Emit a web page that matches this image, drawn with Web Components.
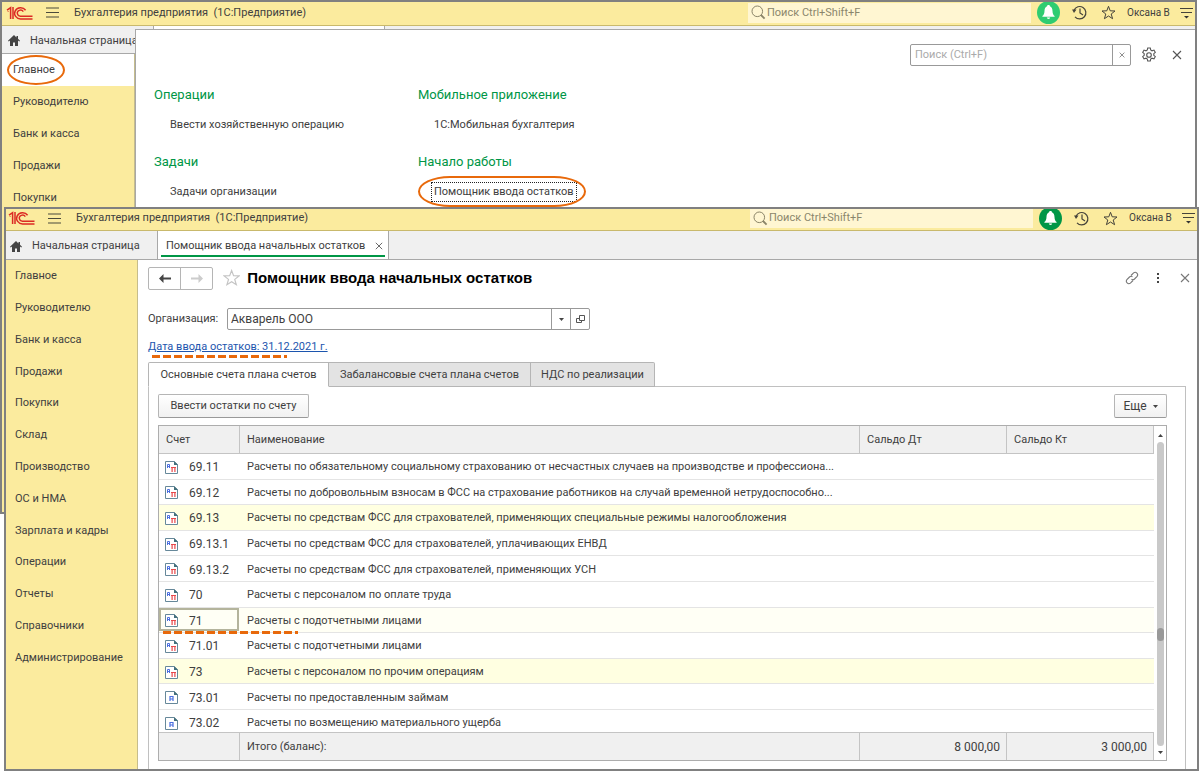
<!DOCTYPE html>
<html lang="ru">
<head>
<meta charset="utf-8">
<title>Бухгалтерия предприятия</title>
<style>
  html { height: 100%; }
  body {
    margin: 0;
    min-height: 100%;
    background: #fff;
    color: #404040;
    font: 11px/16px Roboto, "Liberation Sans", sans-serif;
    --yellow: #fbeb9e;
    --green: #009646;
    --accent: #e8690b;
    --line: #a8a8a8;
  }
</style>
</head>
<body>
<desk-top>
  <app-window class="back">
    <app-topbar slot="bar" bell="#2ecc71"></app-topbar>
    <open-tabs slot="tabs"></open-tabs>
    <section-nav slot="nav" current="Главное" items="Главное|Руководителю|Банк и касса|Продажи|Покупки"></section-nav>
    <function-panel slot="overlay">
      <function-group heading="Операции"><a href="#operation">Ввести хозяйственную операцию</a></function-group>
      <function-group heading="Мобильное приложение"><a href="#mobile">1С:Мобильная бухгалтерия</a></function-group>
      <function-group heading="Задачи"><a href="#tasks">Задачи организации</a></function-group>
      <function-group heading="Начало работы"><a href="#helper" class="focus">Помощник ввода остатков</a></function-group>
    </function-panel>
  </app-window>
  <app-window class="front">
    <app-topbar slot="bar" bell="#009646"></app-topbar>
    <open-tabs slot="tabs" active="Помощник ввода начальных остатков"></open-tabs>
    <section-nav slot="nav" items="Главное|Руководителю|Банк и касса|Продажи|Покупки|Склад|Производство|ОС и НМА|Зарплата и кадры|Операции|Отчеты|Справочники|Администрирование"></section-nav>
    <balance-form>
      <tab-pane><account-table></account-table></tab-pane>
    </balance-form>
  </app-window>
</desk-top>

<script>
const ICONS = {
  logo: ['0 0 27 14', `<g fill="none" stroke="#dc2a24"><path d="M1 4.2 4.6 1.6V13" stroke-width="1.5"/><path d="M2.2 5.5V5M7 1v12" stroke-width="1.5"/><path d="M19.6 4.2A6 5.6 0 1 0 15 12.9H26.5" stroke-width="1.5"/><path d="M17.3 5.6A3.2 3.1 0 1 0 15 10.2H26.5" stroke-width="1.4"/></g>`],
  burger: ['0 0 13 11', `<path d="M0 1h13M0 5.5h13M0 10h13" stroke="#4a4a3c" stroke-width="1.2"/>`],
  search: ['0 0 15 15', `<g fill="none" stroke="#8a8468"><circle cx="6.3" cy="6.3" r="5.3"/><path d="m10 10 3.6 3.6" stroke-width="1.8"/></g>`],
  bell: ['0 0 23 23', `<circle cx="11.5" cy="11.5" r="11.5" fill="currentColor"/><path fill="#fff" d="M11.5 4c.9 0 1.4.5 1.4 1.3 1.8.8 2.5 2.4 2.6 4.6.1 2.700.7 3.800 2.100 5.100v.8H5.400V15c1.400-1.300 2-2.400 2.100-5.100.1-2.200.8-3.800 2.600-4.600 0-.8.5-1.300 1.400-1.300zM9.800 16.500h3.400a1.700 1.500 0 0 1-3.400 0z"/>`],
  history: ['0 0 15 15', `<g fill="none" stroke="#45433a" stroke-width="1.2"><path d="M2 5.200A6.200 6.200 0 1 1 3 11.800"/><path d="M8 3.500V8l3 2"/></g><path fill="#45433a" d="M0 4.500h4.500L2 8z"/>`],
  star: ['0 0 15 15', `<path fill="none" stroke="currentColor" d="m7.500 1.300 1.700 4.500 4.800.2-3.800 3 1.400 4.700-4.100-2.700-4.100 2.700 1.400-4.700-3.800-3 4.800-.2z"/>`],
  settings: ['0 0 13 12', `<path d="M0 1.500h13M1 5.500h11" stroke="#45433a" stroke-width="1.200"/><path fill="#333" d="M4 9h5l-2.500 2.500z"/>`],
  home: ['0 0 12 11', `<path fill="#444" d="M6 0 0 5.700l.7.8L2 5.400V11h3V7.500h2V11h3V5.400l1.300 1.100.7-.8-2-1.900V1H8.500v1.400z"/>`],
  cross: ['0 0 10 10', `<path d="m1 1 8 8M9 1 1 9" stroke="currentColor" stroke-width="1.100"/>`],
  gear: ['0 0 16 16', `<g fill="none" stroke="#555" stroke-width="1.100"><circle cx="8" cy="8" r="2.300"/><path d="M6.700 1h2.600l.4 2 1.300.8 2-.7 1.300 2.200-1.500 1.400v1.600l1.500 1.400-1.300 2.200-2-.7-1.300.8-.4 2H6.700l-.4-2-1.300-.8-2 .7-1.300-2.200 1.500-1.400V6.700L1.700 5.300 3 3.100l2 .7 1.300-.8z"/></g>`],
  left: ['0 0 12 9', `<path fill="currentColor" d="M0 4.500 4.500 0v3.500H12v2H4.500V9z"/>`],
  right: ['0 0 12 9', `<path fill="currentColor" d="M12 4.500 7.500 0v3.500H0v2h7.500V9z"/>`],
  link: ['0 0 14 14', `<g fill="none" stroke="#777" stroke-width="1.100"><path d="M6 4.500 8.600 1.900a2.500 2.500 0 0 1 3.500 3.500L9.500 8A2.500 2.500 0 0 1 6.500 8.300"/><path d="M8 9.500 5.400 12.100a2.500 2.500 0 0 1-3.500-3.500L4.500 6a2.500 2.500 0 0 1 3-.3"/></g>`],
  dots: ['0 0 4 10', `<path fill="#444" d="M1 0h2v2H1zM1 4h2v2H1zM1 8h2v2H1z"/>`],
  down: ['0 0 5 3', `<path fill="#444" d="M0 0h5L2.500 3z"/>`],
  up: ['0 0 5 3', `<path fill="#444" d="M0 3h5L2.500 0z"/>`],
  open: ['0 0 9 9', `<path fill="none" stroke="#555" d="M3.500.5h5v5h-5zM3.500 3.500h-3v4h5v-2"/>`],
  both: ['0 0 13 13', `<path fill="#fff" stroke="#66889a" d="M.5.5h8.500l3.500 3v9H.5z"/><path fill="#44707c" d="M9 0v4h4z"/><path fill="none" stroke="#4a6ee0" d="M2.500 7V3.500h2V7M2.500 5.500h2"/><path fill="none" stroke="#e8484a" stroke-width="1.200" d="M6 6.500h5M7.100 6.500V11M9.900 6.500V11"/>`],
  active: ['0 0 13 13', `<path fill="#fff" stroke="#66889a" d="M.5.5h8.500l3.500 3v9H.5z"/><path fill="#44707c" d="M9 0v4h4z"/><path fill="none" stroke="#4a6ee0" stroke-width="1.200" d="M5 10V5.500h3V10M5 8h3"/>`],
};

const define = (name, css, html) => customElements.define(name, class extends HTMLElement {
  connectedCallback() {
    if (this.shadowRoot) return;
    const root = this.attachShadow({ mode: 'open' });
    root.innerHTML = `<style>:host{display:block}*,*::before,*::after{box-sizing:border-box}button,input{font:inherit;color:inherit;margin:0;padding:0;border:0;background:none}button{display:grid;place-items:center}a{color:inherit;text-decoration:none}${css}</style>${html(this)}`;
  }
});

define('app-icon', `:host{display:inline-block;flex:none;line-height:0}svg{display:block}`, el => {
  const [box, body] = ICONS[el.getAttribute('name')];
  const [, , w, h] = box.split(' ');
  const size = +(el.getAttribute('scale') || 1);
  return `<svg viewBox="${box}" width="${w * size}" height="${h * size}" aria-hidden="true">${body}</svg>`;
});

define('desk-top', `
  :host{display:grid;grid-template:auto / minmax(0,1fr)}
  ::slotted(*){grid-area:1/1}
  ::slotted(.back){margin-right:3px;height:514px;--bar:24px;--inset:4px;--home:6px;--lift:2px;--rows:159px;--tabs:28px;--nav:133px}
  ::slotted(.front){margin:207px 1px 2px 4px;--bar:22px;--inset:2px;--home:4px;--lift:3px;--rows:413px;--tabs:29px;--nav:132px}
`, () => `<slot></slot>`);

define('app-window', `
  :host{display:flex;flex-direction:column;box-sizing:border-box;position:relative;border:2px solid #808080;background:#fff;min-width:0}
  .body{display:flex;flex:1;min-height:0}
  .body>slot:last-child::slotted(*){flex:1;min-width:0}
`, () => `<slot name="bar"></slot><slot name="tabs"></slot><div class="body"><slot name="nav"></slot><slot></slot></div><slot name="overlay"></slot>`);

define('app-topbar', `
  header{display:flex;align-items:center;height:var(--bar);padding:0 2px var(--lift) var(--inset);background:var(--yellow);border-bottom:1px solid #c9b96c;overflow:hidden}
  .burger{margin:0 15px 0 13px}
  h1{margin:0;flex:1;font-size:11px;font-weight:400;white-space:pre}
  label{display:flex;align-items:center;gap:1px;width:283px;height:20px;padding-left:3px;background:#fff6d2}
  input{flex:1;min-width:0;height:16px;outline:0}
  input::placeholder{color:#8b866c;opacity:1}
  .bell{color:var(--bell);margin-left:6px}
  .hist{margin-left:12px}.star{margin-left:14px;color:#45433a}
  .user{margin-left:11px;width:53px;font-size:10px;text-align:left}
`, el => `<header style="--bell:${el.getAttribute('bell')}">
  <app-icon name="logo"></app-icon>
  <button class="burger" aria-label="Меню"><app-icon name="burger"></app-icon></button>
  <h1>Бухгалтерия предприятия  (1С:Предприятие)</h1>
  <label aria-label="Поиск"><app-icon name="search"></app-icon><input type="search" placeholder="Поиск Ctrl+Shift+F"></label>
  <button class="bell" aria-label="Уведомления"><app-icon name="bell"></app-icon></button>
  <button class="hist" aria-label="История"><app-icon name="history"></app-icon></button>
  <button class="star" aria-label="Избранное"><app-icon name="star"></app-icon></button>
  <a class="user" href="#user">Оксана В</a>
  <button aria-label="Настройки"><app-icon name="settings"></app-icon></button>
</header>`);

define('open-tabs', `
  nav{display:flex;height:var(--tabs);background:#f0f0f0;border-bottom:1px solid var(--line)}
  a{display:flex;align-items:center}
  .home{width:152px;gap:10px;padding:2px 0 0 var(--home);border-right:1px solid var(--line);white-space:nowrap}
  .tab{position:relative;width:231px;padding:2px 5px 0 8px;background:#fff;border-right:1px solid var(--line);display:flex;align-items:center;justify-content:space-between;white-space:nowrap}
  .on::after{content:"";position:absolute;inset:auto 3px 2px 3px;height:2px;background:var(--green)}
  button{color:#555}
`, el => {
  const t = el.getAttribute('active');
  return `<nav><a class="home" href="#home"><app-icon name="home"></app-icon>Начальная страница</a><div class="tab ${t ? 'on' : ''}">${t ? `<a href="#tab">${t}</a><button aria-label="Закрыть вкладку"><app-icon name="cross" scale="0.8"></app-icon></button>` : ''}</div></nav>`;
});

define('section-nav', `
  :host{flex:none;width:var(--nav);box-sizing:border-box;background:var(--yellow);border-right:1px solid #c6bd8c}
  nav{display:grid;grid-auto-rows:1fr;height:var(--rows)}
  a{display:flex;align-items:center;padding:1px 0 0 9px}
  .current{position:relative;background:#fff;padding-left:11px}
  .current~a{padding-left:11px}
  .current::after{content:"";position:absolute;inset:1px auto 1px 5px;width:58px;border:2px solid var(--accent);border-radius:50%/50%}
`, el => `<nav>${el.getAttribute('items').split('|').map(t => `<a href="#section"${t === el.getAttribute('current') ? ' class="current" aria-current="page"' : ''}>${t}</a>`).join('')}</nav>`);

define('function-panel', `
  :host{position:absolute;inset:27px 0 0 133px;border:1px solid var(--line);border-width:1px 0 0 1px;background:#fff}
  .tools{display:flex;justify-content:flex-end;align-items:center;padding:14px 13px 0 0}
  .find{display:flex;width:221px;height:22px;border:1px solid #999;border-radius:2px}
  input{flex:1;min-width:0;padding:0 4px;outline:0}
  input::placeholder{color:#aaa;opacity:1}
  .find button{width:18px;border-left:1px solid #999;color:#555}
  .gear{margin:0 15px 0 10px}
  .close{color:#555}
  .groups{display:grid;grid-template-columns:264px 264px;grid-auto-rows:67px;padding:19px 0 0 18px}
`, () => `<div class="tools"><div class="find"><input type="text" aria-label="Поиск" placeholder="Поиск (Ctrl+F)"><button aria-label="Очистить"><app-icon name="cross" scale="0.6"></app-icon></button></div>
  <button class="gear" aria-label="Настройка"><app-icon name="gear"></app-icon></button><button class="close" aria-label="Закрыть"><app-icon name="cross"></app-icon></button></div>
  <div class="groups"><slot></slot></div>`);

define('function-group', `
  h2{margin:0;font-size:13px;line-height:20px;font-weight:400;color:var(--green)}
  .list{padding:11px 0 0 14px;display:flex}
  ::slotted(a){position:relative;color:#404040;text-decoration:none;padding:0 2px;line-height:18px}
  ::slotted(.focus){outline:1px dotted #222}
  .mark{position:relative;display:flex}
  .ring::after{content:"";position:absolute;inset:-7px -10px -6px -14px;border:2px solid var(--accent);border-radius:32px/50%}
`, el => `<h2>${el.getAttribute('heading')}</h2><div class="list"><span class="mark ${el.querySelector('.focus') ? 'ring' : ''}"><slot></slot></span></div>`);

define('balance-form', `
  :host{display:flex;flex-direction:column;padding:6px 11px 0 10px}
  .title{display:flex;align-items:center;height:24px}
  .hist{display:flex;width:65px;height:23px;border:1px solid #b5b5b5;border-radius:2px}
  .hist button{flex:1;color:#444}
  .hist button+button{color:#ccc;border-left:1px solid #b5b5b5}
  .star{margin:0 7px 0 10px;color:#c4c4c4}
  h1{margin:0;flex:1;font:bold 15px/20px "Liberation Sans",Arial,sans-serif;color:#000}
  .menu{margin:0 20px 0 17px}
  .close{color:#777;margin-right:-4px}
  .org{display:flex;align-items:center;margin-top:18px}
  .org label{width:79px}
  .field{display:flex;width:363px;height:22px;border:1px solid #999;border-radius:2px}
  input{flex:1;min-width:0;padding:0 3px;outline:0;font-size:12px}
  .field button{width:19px;border-left:1px solid #999}
  .date{display:flex;margin-top:8px}
  .date a{position:relative;color:#1c55ae;text-decoration:underline;line-height:18px}
  .date a::after{content:"";position:absolute;left:4px;bottom:-2px;width:135px;height:3px;background:repeating-linear-gradient(90deg,var(--accent) 0 8px,transparent 8px 11px)}
  slot{display:flex;flex:1;margin-top:6px}
  ::slotted(*){flex:1;min-width:0}
`, () => `<div class="title"><div class="hist"><button aria-label="Назад"><app-icon name="left"></app-icon></button><button aria-label="Вперед" disabled><app-icon name="right"></app-icon></button></div>
  <button class="star" aria-label="В избранное"><app-icon name="star" scale="1.15"></app-icon></button><h1>Помощник ввода начальных остатков</h1>
  <button aria-label="Ссылка"><app-icon name="link"></app-icon></button><button class="menu" aria-label="Еще"><app-icon name="dots"></app-icon></button><button class="close" aria-label="Закрыть"><app-icon name="cross"></app-icon></button></div>
  <div class="org"><label for="org">Организация:</label><div class="field"><input id="org" type="text" value="Акварель ООО"><button aria-label="Выбрать"><app-icon name="down"></app-icon></button><button aria-label="Открыть"><app-icon name="open"></app-icon></button></div></div>
  <div class="date"><a href="#date">Дата ввода остатков: 31.12.2021 г.</a></div>
  <slot></slot>`);

define('tab-pane', `
  :host{display:flex;flex-direction:column}
  .tabs{display:flex;position:relative;height:25px;margin-bottom:-1px}
  .tabs button{border:1px solid #b5b5b5;border-left:0;background:#e3e3e3;width:202px}
  .tabs button:first-child{width:181px;border-left:1px solid #b5b5b5;background:#fff;border-bottom-color:#fff;border-radius:2px 0 0 0}
  .tabs button:last-child{width:124px;border-radius:0 2px 0 0}
  .pane{flex:1;display:flex;flex-direction:column;gap:7px;border:1px solid #c0c0c0;border-bottom:0;padding:7px 18px 8px 9px}
  .tools{display:flex;justify-content:space-between}
  .tools button{height:24px;width:151px;border:1px solid #b5b5b5;border-bottom-color:#999;border-radius:2px;background:linear-gradient(#fff,#f1f1f1)}
  .tools .more{width:53px;display:flex;justify-content:center;align-items:center;gap:6px;font-size:12px}
`, () => `<div class="tabs" role="tablist"><button role="tab" aria-selected="true">Основные счета плана счетов</button><button role="tab">Забалансовые счета плана счетов</button><button role="tab">НДС по реализации</button></div>
  <div class="pane"><div class="tools"><button>Ввести остатки по счету</button><button class="more">Еще<app-icon name="down"></app-icon></button></div><slot></slot></div>`);

const ROWS = [
  ['69.11', 'Расчеты по обязательному социальному страхованию от несчастных случаев на производстве и профессиона...'],
  ['69.12', 'Расчеты по добровольным взносам в ФСС на страхование работников на случай временной нетрудоспособно...'],
  ['69.13', 'Расчеты по средствам ФСС для страхователей, применяющих специальные режимы налогообложения', 'group'],
  ['69.13.1', 'Расчеты по средствам ФСС для страхователей, уплачивающих ЕНВД'],
  ['69.13.2', 'Расчеты по средствам ФСС для страхователей, применяющих УСН'],
  ['70', 'Расчеты с персоналом по оплате труда'],
  ['71', 'Расчеты с подотчетными лицами', 'selected'],
  ['71.01', 'Расчеты с подотчетными лицами'],
  ['73', 'Расчеты с персоналом по прочим операциям', 'group'],
  ['73.01', 'Расчеты по предоставленным займам', '', 'active'],
  ['73.02', 'Расчеты по возмещению материального ущерба', 'cut', 'active'],
];

define('account-table', `
  :host{display:flex;border:1px solid #adadad}
  table{flex:1;min-width:0;width:0;height:334px;table-layout:fixed;border-collapse:separate;border-spacing:0}
  .acc{width:81px}.sum{width:147px}
  th,td{padding:0 7px;text-align:left;font-weight:400;vertical-align:middle;white-space:nowrap;overflow:hidden}
  thead th,tfoot td{height:28px;background:#f0f0f0;border-right:1px solid #c4c4c4}
  thead th{border-bottom:1px solid #c4c4c4}
  tfoot td{border-top:1px solid #c4c4c4;text-align:right;font-size:12px;padding-right:6px}
  tfoot .name{text-align:left;font-size:11px}
  tbody td{border-bottom:1px solid #e4e4e4;padding-top:2px}
  tbody .code{padding:2px 0 0 6px;position:relative;overflow:visible;font-size:12px}
  .code div{display:flex;align-items:center;gap:11px}
  .group td{background:#ffffe1}
  .selected td{background:#fffff5}
  .selected .code::before{content:"";position:absolute;inset:0 1px 1px 0;border:2px solid #b4b49c}
  .selected .code::after{content:"";position:absolute;z-index:1;left:4px;bottom:-2px;width:135px;height:3px;background:repeating-linear-gradient(90deg,var(--accent) 0 8px,transparent 8px 11px)}
  .cut td,.cut .code{height:22px;padding-top:4px;border-bottom:0}
  .scroll{width:12px;display:flex;flex-direction:column;align-items:center;gap:5px;padding:8px 0 6px}
  .track{flex:1;width:7px;border-radius:4px;background:#c9c9c9;display:grid;grid-template-rows:187fr 13px 105fr}
  .thumb{grid-row:2;border-radius:4px;background:#999}
`, () => `<table><colgroup><col class="acc"><col><col class="sum"><col class="sum"></colgroup>
  <thead><tr><th>Счет</th><th>Наименование</th><th>Сальдо Дт</th><th>Сальдо Кт</th></tr></thead>
  <tbody>${ROWS.map(([c, n, k = '', i = 'both']) => `<tr class="${k}"><td class="code"><div><app-icon name="${i}"></app-icon>${c}</div></td><td>${n}</td><td></td><td></td></tr>`).join('')}</tbody>
  <tfoot><tr><td></td><td class="name">Итого (баланс):</td><td>8 000,00</td><td>3 000,00</td></tr></tfoot></table>
  <div class="scroll"><app-icon name="up"></app-icon><div class="track"><div class="thumb"></div></div><app-icon name="down"></app-icon></div>`);
</script>
</body>
</html>
